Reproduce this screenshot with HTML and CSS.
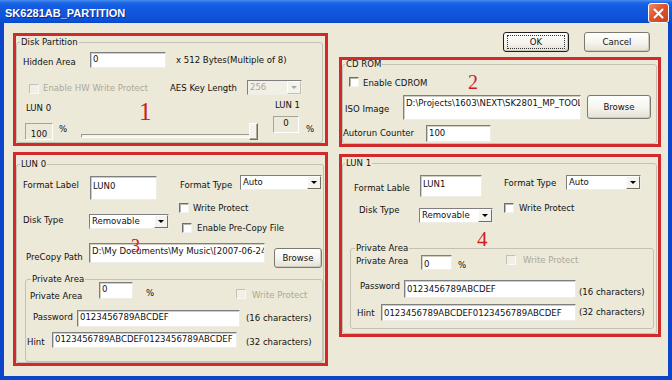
FILE: index.html
```html
<!DOCTYPE html>
<html lang="en">
<head>
    <meta charset="UTF-8">
    <meta name="viewport" content="width=device-width, initial-scale=1.0">
    <title>SK6281AB_PARTITION</title>
    <link rel="stylesheet" href="styles.css">
</head>
<body>
<div class="window">
    <div class="titlebar">
        <span class="title">SK6281AB_PARTITION</span>
        <span class="close">
            <svg width="11" height="11" viewBox="0 0 11 11"><path d="M1.5 1.5 L9.5 9.5 M9.5 1.5 L1.5 9.5" stroke="#fff" stroke-width="2" stroke-linecap="round"/></svg>
        </span>
    </div>
    <div class="client">
        <div class="col col-left">
            <!-- 1: disk partition -->
            <div class="mark mark-dp">
                <fieldset class="group group-dp">
                    <legend>Disk Partition</legend>
                    <div class="row dp-row1">
                        <span class="lbl dp-hidden-lbl">Hidden Area</span>
                        <span class="edit dp-hidden">0</span>
                        <span class="lbl dp-note">x 512 Bytes(Multiple of 8)</span>
                    </div>
                    <div class="row dp-row2">
                        <span class="check off dp-hw-check"></span>
                        <span class="lbl off dp-hw-lbl">Enable HW Write Protect</span>
                        <span class="lbl dp-aes-lbl">AES Key Length</span>
                        <span class="combo off dp-aes"><span class="val">256</span><span class="drop"></span></span>
                    </div>
                    <div class="row dp-row3">
                        <span class="lbl dp-lun0">LUN 0</span>
                        <span class="lbl dp-lun1">LUN 1</span>
                    </div>
                    <div class="row dp-row4">
                        <span class="static dp-size0">100</span>
                        <span class="lbl dp-pct">%</span>
                        <span class="slider"><span class="track"></span><span class="thumb"></span></span>
                        <span class="static dp-size1">0</span>
                        <span class="lbl dp-pct dp-pct1">%</span>
                    </div>
                </fieldset>
                <span class="num num-1">1</span>
            </div>

            <!-- 3: LUN 0 -->
            <div class="mark mark-lun0">
                <fieldset class="group group-lun0">
                    <legend>LUN 0</legend>
                    <div class="row l0-row1">
                        <span class="lbl l0-label-lbl">Format Label</span>
                        <span class="edit l0-label">LUN0</span>
                        <span class="lbl l0-type-lbl">Format Type</span>
                        <span class="combo l0-type"><span class="val">Auto</span><span class="drop"></span></span>
                    </div>
                    <div class="row l0-row2">
                        <span class="lbl l0-disk-lbl">Disk Type</span>
                        <span class="combo l0-disk"><span class="val">Removable</span><span class="drop"></span></span>
                        <div class="l0-checks">
                            <div class="opt l0-wp"><span class="check"></span><span class="lbl">Write Protect</span></div>
                            <div class="opt l0-pre"><span class="check"></span><span class="lbl">Enable Pre-Copy File</span></div>
                        </div>
                    </div>
                    <div class="row l0-row3">
                        <span class="lbl l0-path-lbl">PreCopy Path</span>
                        <span class="edit l0-path">D:\My Documents\My Music\[2007-06-24]</span>
                        <span class="btn l0-browse">Browse</span>
                    </div>
                    <fieldset class="group sub sub-l0">
                        <legend>Private Area</legend>
                        <div class="row pa0-row1">
                            <span class="lbl pa0-area-lbl">Private Area</span>
                            <span class="edit pa0-area">0</span>
                            <span class="lbl pa0-pct">%</span>
                            <span class="check off pa0-check"></span>
                            <span class="lbl off pa0-wp">Write Protect</span>
                        </div>
                        <div class="row pa0-row2">
                            <span class="lbl pa0-pass-lbl">Password</span>
                            <span class="edit pa0-pass">0123456789ABCDEF</span>
                            <span class="lbl pa0-pass-note">(16 characters)</span>
                        </div>
                        <div class="row pa0-row3">
                            <span class="lbl pa0-hint-lbl">Hint</span>
                            <span class="edit pa0-hint">0123456789ABCDEF0123456789ABCDEF</span>
                            <span class="lbl pa0-hint-note">(32 characters)</span>
                        </div>
                    </fieldset>
                </fieldset>
                <span class="num num-3">3</span>
            </div>
        </div>

        <div class="col col-right">
            <div class="buttons">
                <span class="btn btn-ok"><span class="focus">OK</span></span>
                <span class="btn btn-cancel">Cancel</span>
            </div>

            <!-- 2: CD ROM -->
            <div class="mark mark-cd">
                <fieldset class="group group-cd">
                    <legend>CD ROM</legend>
                    <div class="row cd-row1">
                        <span class="check cd-check"></span>
                        <span class="lbl cd-enable">Enable CDROM</span>
                    </div>
                    <div class="row cd-row2">
                        <span class="lbl cd-iso-lbl">ISO Image</span>
                        <span class="edit cd-iso">D:\Projects\1603\NEXT\SK2801_MP_TOOL\CD</span>
                        <span class="btn cd-browse">Browse</span>
                    </div>
                    <div class="row cd-row3">
                        <span class="lbl cd-auto-lbl">Autorun Counter</span>
                        <span class="edit cd-auto">100</span>
                    </div>
                </fieldset>
                <span class="num num-2">2</span>
            </div>

            <!-- 4: LUN 1 -->
            <div class="mark mark-lun1">
                <fieldset class="group group-lun1">
                    <legend>LUN 1</legend>
                    <div class="row l1-row1">
                        <span class="lbl l1-label-lbl">Format Lable</span>
                        <span class="edit l1-label">LUN1</span>
                        <span class="lbl l1-type-lbl">Format Type</span>
                        <span class="combo l1-type"><span class="val">Auto</span><span class="drop"></span></span>
                    </div>
                    <div class="row l1-row2">
                        <span class="lbl l1-disk-lbl">Disk Type</span>
                        <span class="combo l1-disk"><span class="val">Removable</span><span class="drop"></span></span>
                        <span class="check l1-check"></span>
                        <span class="lbl l1-wp">Write Protect</span>
                    </div>
                    <fieldset class="group sub sub-l1">
                        <legend>Private Area</legend>
                        <div class="row pa1-row1">
                            <span class="lbl pa1-area-lbl">Private Area</span>
                            <span class="edit pa1-area">0</span>
                            <span class="lbl pa1-pct">%</span>
                            <span class="check off pa1-check"></span>
                            <span class="lbl off pa1-wp">Write Protect</span>
                        </div>
                        <div class="row pa1-row2">
                            <span class="lbl pa1-pass-lbl">Password</span>
                            <span class="edit pa1-pass">0123456789ABCDEF</span>
                            <span class="lbl pa1-pass-note">(16 characters)</span>
                        </div>
                        <div class="row pa1-row3">
                            <span class="lbl pa1-hint-lbl">Hint</span>
                            <span class="edit pa1-hint">0123456789ABCDEF0123456789ABCDEF</span>
                            <span class="lbl pa1-hint-note">(32 characters)</span>
                        </div>
                    </fieldset>
                </fieldset>
                <span class="num num-4">4</span>
            </div>
        </div>
    </div>
</div>
</body>
</html>
```

FILE: styles.css
```css
* {
    box-sizing: border-box;
}
body {
    margin: 0;
    overflow: hidden;
    font-family: "DejaVu Sans Condensed", "DejaVu Sans", sans-serif;
    font-size: 9.5px;
    line-height: 12px;
    color: #111;
}
.window {
    width: 672px;
    height: 380px;
    display: flex;
    flex-direction: column;
    background: #0c45c9;
}

/* title bar */
.titlebar {
    height: 23px;
    flex: none;
    display: flex;
    align-items: center;
    padding: 2px 3px 0 5px;
    background: linear-gradient(#4a8ef0 0, #1a64e4 3px, #125ae0 8px, #0f55dc 15px, #0c4fd4 21px, #0a47c6 23px);
}
.title {
    font-family: "Liberation Sans", Arial, sans-serif;
    font-weight: bold;
    font-size: 11px;
    color: #fff;
    text-shadow: 1px 1px 0 #0a2a8a;
}
.close {
    margin-left: auto;
    align-self: flex-end;
    width: 21px;
    height: 20px;
    display: flex;
    align-items: center;
    justify-content: center;
    background: linear-gradient(135deg, #ef8a68, #e0542c 45%, #c8401c);
    border: 1px solid #fff;
    border-radius: 3px;
}

/* client area */
.client {
    flex: 1;
    display: flex;
    gap: 11px;
    margin: 0 4px 4px;
    padding: 10px 7px 0 9px;
    background: #ece9d8;
}
.col {
    display: flex;
    flex-direction: column;
}
.col-left {
    width: 315px;
    gap: 6px;
}
.col-right {
    width: 322px;
    margin-top: -1px;
}

/* red annotation frames */
.mark {
    position: relative;
    display: flex;
    flex-direction: column;
    border: 3px solid #d22a2a;
}
.mark-dp { height: 113px; }
.mark-lun0 { height: 214px; }
.mark-cd { height: 90px; margin-top: 5px; }
.mark-lun1 { height: 183px; margin-top: 7px; }

.num {
    position: absolute;
    font-family: "Liberation Serif", "Times New Roman", serif;
    line-height: 1;
    color: #cc2020;
}
.num-1 { left: 123px; top: 63px; font-size: 25px; }
.num-2 { left: 126px; top: 12px; font-size: 20px; }
.num-3 { left: 115px; top: 82px; font-size: 18px; }
.num-4 { left: 135px; top: 72px; font-size: 21px; }

/* group boxes */
.group {
    margin: 0;
    padding: 0;
    min-width: 0;
    border: 1px solid #c4c1b2;
    border-radius: 3px;
    flex: 1;
}
.group legend {
    padding: 0 1px;
    line-height: 12px;
}
.group-dp { margin-right: 2px; }
.group-dp legend { margin-left: 3px; }
.group-cd { margin: -2px 1px 0 0; }
.group-cd legend { margin-left: 2px; }
.group-lun0 { margin: 3px 1px 0 0; }
.group-lun0 legend { margin-left: 3px; }
.group-lun1 { margin-right: 1px; }
.group-lun1 legend { margin-left: 2px; }

.sub {
    flex: none;
}
.sub-l0 { margin: 5px 0 0 8px; padding-bottom: 13px; }
.sub-l0 legend { margin-left: 5px; }
.sub-l1 { margin: 19px 2px 0 7px; padding-bottom: 7px; }
.sub-l1 legend { margin-left: 4px; }

/* controls */
.row {
    display: flex;
    align-items: flex-start;
}
.lbl {
    flex: none;
    white-space: nowrap;
}
.off {
    color: #aca899;
}
.edit {
    flex: none;
    padding: 0 2px;
    overflow: hidden;
    white-space: nowrap;
    background: #fff;
    border: 1px solid;
    border-color: #7f7f7f #eeede6 #eeede6 #7f7f7f;
    box-shadow: inset 1px 1px 0 #cfcdc2;
}
.static {
    flex: none;
    height: 17px;
    text-align: center;
    background: #ece9d8;
    border: 1px solid;
    border-color: #a7a59a #fff #fff #a7a59a;
}
.check {
    flex: none;
    width: 10px;
    height: 10px;
    background: #fff;
    border: 1px solid;
    border-color: #6e6e6e #f2f2ee #f2f2ee #6e6e6e;
    box-shadow: inset 1px 1px 0 #b9b7ad;
}
.check.off {
    background: #f1efe6;
    border-color: #c4c1b4 #faf9f5 #faf9f5 #c4c1b4;
    box-shadow: none;
}
.combo {
    flex: none;
    display: flex;
    height: 15px;
    background: #fff;
    border: 1px solid;
    border-color: #7f7f7f #eeede6 #eeede6 #7f7f7f;
}
.combo .val {
    flex: 1;
    padding: 0 2px;
    overflow: hidden;
    white-space: nowrap;
}
.combo .drop {
    width: 14px;
    display: flex;
    align-items: center;
    justify-content: center;
    background: #f4f3ee;
    border: 1px solid;
    border-color: #fff #716f64 #716f64 #fff;
}
.combo .drop::after {
    content: "";
    border-left: 3px solid transparent;
    border-right: 3px solid transparent;
    border-top: 3px solid #000;
}
.combo.off {
    background: #f1efe6;
}
.combo.off .val {
    color: #aca899;
}
.combo.off .drop {
    border-color: #fff #c4c1b4 #c4c1b4 #fff;
}
.combo.off .drop::after {
    border-top-color: #aca899;
}
.btn {
    flex: none;
    display: flex;
    align-items: center;
    justify-content: center;
    border: 1px solid #7b7a70;
    border-radius: 3px;
    background: linear-gradient(#fff, #f6f5f0 50%, #e4e1d4);
    box-shadow: inset -1px -1px 0 #cdcabd;
}

/* buttons */
.buttons {
    display: flex;
    gap: 15px;
    height: 20px;
    padding-left: 164px;
}
.btn-ok, .btn-cancel { width: 66px; height: 20px; }
.btn-ok {
    border-color: #1e1e1e;
    padding: 2px 3px;
}
.btn-ok .focus {
    flex: 1;
    align-self: stretch;
    display: flex;
    align-items: center;
    justify-content: center;
    border: 1px dotted #333;
}

/* disk partition */
.dp-row1 { margin-top: 4px; height: 16px; }
.dp-hidden-lbl { margin-left: 6px; width: 67px; padding-top: 4px; }
.dp-hidden { width: 76px; height: 16px; }
.dp-note { margin-left: 10px; padding-top: 2px; }
.dp-row2 { margin-top: 12px; height: 15px; }
.dp-hw-check { margin: 4px 0 0 12px; }
.dp-hw-lbl { margin-left: 4px; width: 127px; padding-top: 2px; }
.dp-aes-lbl { width: 77px; padding-top: 2px; }
.dp-aes { width: 55px; }
.dp-row3 { margin-top: 6px; height: 12px; }
.dp-lun0 { margin-left: 9px; padding-top: 1px; }
.dp-lun1 { margin: -2px 22px 0 auto; }
.dp-row4 { margin-top: 3px; height: 24px; }
.dp-size0 { margin: 7px 0 0 8px; width: 28px; padding-top: 4px; }
.dp-pct { margin-left: 6px; width: 8px; padding-top: 7px; }
.dp-pct1 { margin-left: 7px; }
.slider {
    position: relative;
    flex: none;
    width: 177px;
    height: 17px;
    margin: 7px 0 0 14px;
}
.slider .track {
    display: block;
    margin-top: 11px;
    height: 4px;
    background: #f4f3ee;
    border: 1px solid;
    border-color: #9d9a8c #fff #fff #9d9a8c;
}
.slider .thumb {
    position: absolute;
    right: 0;
    top: 0;
    width: 9px;
    height: 17px;
    background: #f3f2ec;
    border: 1px solid;
    border-color: #fff #716f64 #716f64 #fff;
    box-shadow: inset -1px -1px 0 #aca899;
}
.dp-size1 { margin-left: 15px; width: 26px; }

/* cd rom */
.cd-row1 { margin-top: 7px; }
.cd-check { margin-left: 6px; }
.cd-enable { margin-left: 4px; }
.cd-row2 { margin-top: 6px; }
.cd-iso-lbl { margin-left: 2px; width: 58px; padding-top: 8px; }
.cd-iso { width: 178px; height: 25px; padding-top: 1px; }
.cd-browse { margin-left: 6px; width: 64px; height: 24px; }
.cd-row3 { margin-top: 5px; }
.cd-auto-lbl { width: 83px; padding-top: 2px; }
.cd-auto { width: 65px; height: 17px; padding-top: 1px; }

/* lun 0 */
.l0-row1 { margin-top: 5px; }
.l0-label-lbl { margin-left: 6px; width: 67px; padding-top: 4px; }
.l0-label { margin-top: 1px; width: 67px; height: 24px; padding-top: 3px; }
.l0-type-lbl { margin-left: 23px; width: 60px; padding-top: 4px; }
.l0-type { width: 82px; }
.l0-row2 { margin-top: 3px; }
.l0-disk-lbl { margin-left: 6px; width: 66px; padding-top: 11px; }
.l0-disk { margin-top: 11px; width: 80px; }
.l0-checks { margin-left: 10px; }
.opt { display: flex; align-items: flex-start; }
.opt .lbl { margin: -1px 0 0 4px; }
.l0-pre { margin: 9px 0 0 3px; }
.l0-pre .lbl { margin-left: 5px; }
.l0-row3 { margin-top: 9px; }
.l0-path-lbl { margin-left: 9px; width: 63px; padding-top: 8px; }
.l0-path { width: 176px; height: 20px; padding-top: 1px; }
.l0-browse { margin: 5px 0 0 9px; width: 48px; height: 20px; }

.pa0-row1 { margin-top: -3px; }
.pa0-area-lbl { margin-left: 4px; width: 69px; padding-top: 8px; }
.pa0-area { width: 34px; height: 17px; }
.pa0-pct { margin-left: 13px; width: 10px; padding-top: 5px; }
.pa0-check { margin: 7px 0 0 80px; }
.pa0-wp { margin-left: 6px; padding-top: 7px; }
.pa0-row2 { margin-top: 8px; }
.pa0-pass-lbl { margin-left: 7px; width: 44px; padding-top: 1px; }
.pa0-pass { width: 163px; height: 17px; }
.pa0-pass-note { margin-left: 6px; padding-top: 2px; }
.pa0-row3 { margin-top: 5px; }
.pa0-hint-lbl { margin-left: 1px; width: 25px; padding-top: 4px; }
.pa0-hint { width: 185px; height: 16px; }
.pa0-hint-note { margin-left: 9px; padding-top: 4px; }

/* lun 1 */
.l1-row1 { margin-top: 6px; }
.l1-label-lbl { margin-left: 11px; width: 66px; padding-top: 7px; }
.l1-label { width: 62px; height: 22px; padding-top: 2px; }
.l1-type-lbl { margin-left: 22px; width: 62px; padding-top: 2px; }
.l1-type { width: 75px; }
.l1-row2 { margin-top: 5px; }
.l1-disk-lbl { margin-left: 16px; width: 60px; padding-top: 2px; }
.l1-disk { margin-top: 6px; width: 74px; }
.l1-check { margin: 1px 0 0 11px; }
.l1-wp { margin-left: 5px; }

.pa1-area-lbl { margin-left: 5px; width: 65px; padding-top: 1px; }
.pa1-area { margin-top: 1px; width: 31px; height: 15px; padding-top: 2px; line-height: 11px; }
.pa1-pct { margin-left: 6px; width: 10px; padding-top: 5px; }
.pa1-check { margin: 1px 0 0 38px; }
.pa1-wp { margin-left: 7px; }
.pa1-row2 { margin-top: 9px; }
.pa1-pass-lbl { margin-left: 9px; width: 44px; }
.pa1-pass { width: 172px; height: 18px; padding-top: 2px; }
.pa1-pass-note { margin-left: 3px; padding-top: 6px; }
.pa1-row3 { margin-top: 6px; }
.pa1-hint-lbl { margin-left: 6px; width: 24px; padding-top: 3px; }
.pa1-hint { width: 195px; height: 17px; padding-top: 2px; }
.pa1-hint-note { margin-left: 3px; padding-top: 2px; }
```
